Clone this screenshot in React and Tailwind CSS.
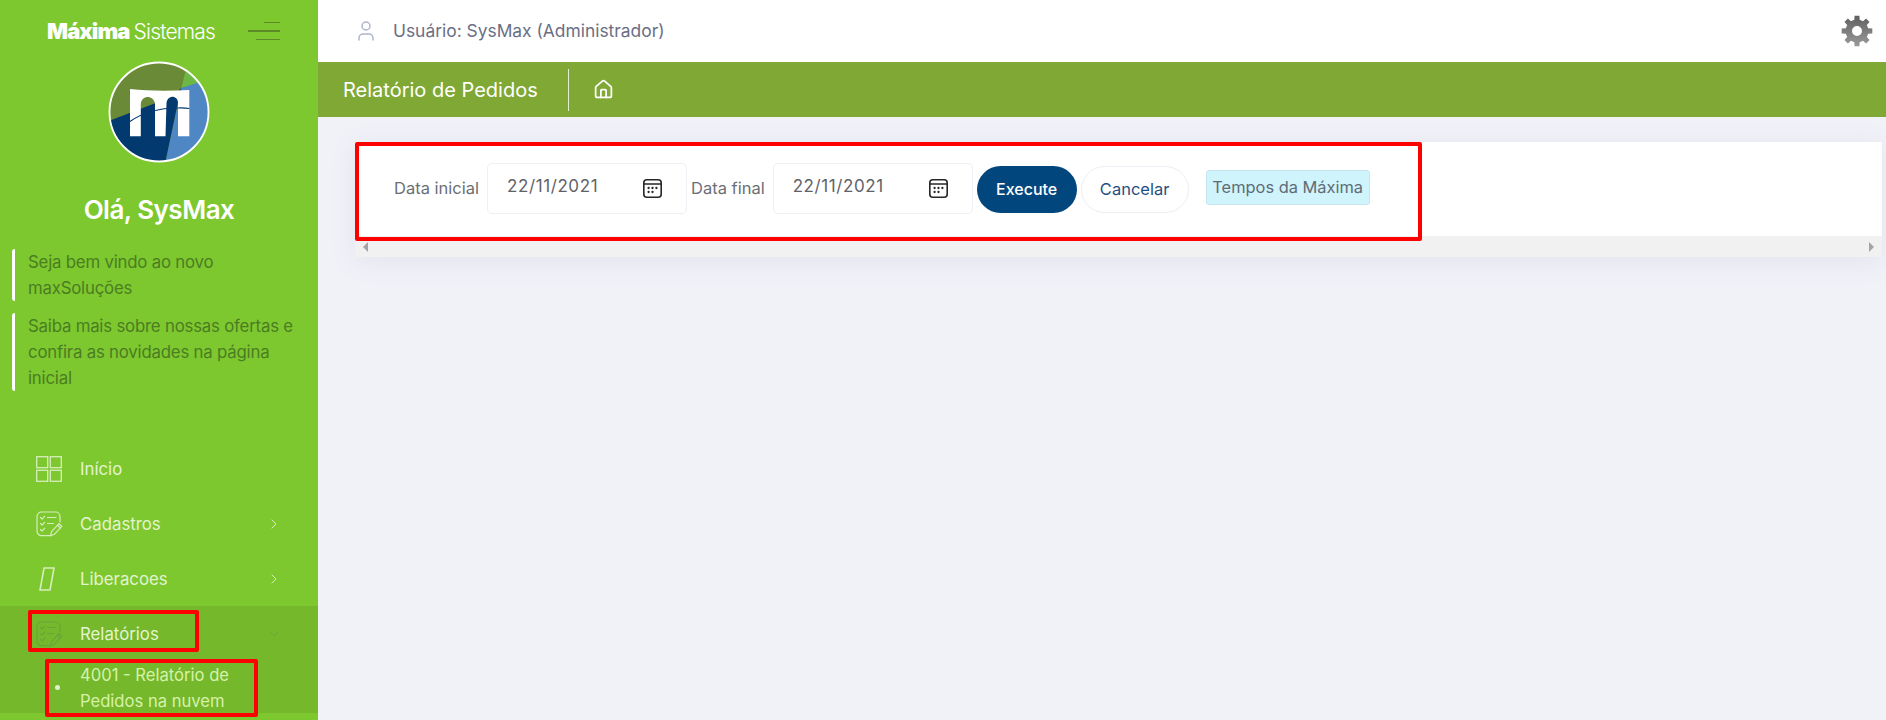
import React from "react";
import { ChevronRight, ChevronDown, User, House } from "lucide-react";

const gearPath = (() => {
  const cx = 16, cy = 16, n = 8, ro = 15.5, ri = 11.5;
  const pts = [];
  for (let i = 0; i < n; i++) {
    const a = (i / n) * Math.PI * 2 - Math.PI / 2;
    const step = (Math.PI * 2) / n;
    const w1 = step * 0.3, w2 = step * 0.2;
    [[-w1, ri], [-w2, ro], [w2, ro], [w1, ri]].forEach(([d, r]) => {
      pts.push([cx + r * Math.cos(a + d), cy + r * Math.sin(a + d)]);
    });
  }
  const outer = "M" + pts.map((p) => p[0].toFixed(2) + " " + p[1].toFixed(2)).join("L") + "Z";
  return outer + " M16 11a5 5 0 1 0 0 10a5 5 0 1 0 0-10Z";
})();

function Gear() {
  return (
    <svg width="32" height="32" viewBox="0 0 32 32" className="shrink-0">
      <defs>
        <linearGradient id="gearg" x1="0" y1="0" x2="0" y2="1">
          <stop offset="0" stopColor="#5f5f5f" />
          <stop offset="1" stopColor="#9a9a9a" />
        </linearGradient>
      </defs>
      <path d={gearPath} fill="url(#gearg)" fillRule="evenodd" />
    </svg>
  );
}

function Logo() {
  return (
    <svg width="102" height="102" viewBox="0 0 102 102" className="block">
      <defs>
        <clipPath id="lc">
          <circle cx="51" cy="51" r="49" />
        </clipPath>
      </defs>
      <g clipPath="url(#lc)">
        <rect width="102" height="102" fill="#6a8a38" />
        <polygon points="73.3,27 77.7,10 100,10 100,21" fill="#6db844" />
        <polygon points="73.3,27 100,18.5 104,104 56.7,104" fill="#4f87c4" />
        <polygon points="0,60.3 66,35 73,27 56.7,104 0,104" fill="#023a70" />
      </g>
      <path
        d="M22 28C40 30 60 30 81.3 29V75.3H70V42C70 34 59.5 33.5 58.5 42L57.5 75.3H47V43C46 34 33.5 33.5 32.8 43V75.3H22Z"
        fill="#ffffff"
      />
      <path d="M22 60.5C34 52 50 47 70 47C74 46.8 78 47 81.3 47.5" fill="none" stroke="#023a70" strokeWidth="1.1" />
      <circle cx="51" cy="51" r="49.5" fill="none" stroke="#ffffff" strokeWidth="1.8" />
    </svg>
  );
}

function GridIcon() {
  return (
    <svg width="26" height="26" viewBox="0 0 26 26" fill="none" stroke="#d6edbd" strokeWidth="1.3">
      <rect x="0.7" y="0.7" width="11" height="11" />
      <rect x="14.3" y="0.7" width="11" height="11" />
      <rect x="0.7" y="14.3" width="11" height="11" />
      <rect x="14.3" y="14.3" width="11" height="11" />
    </svg>
  );
}

function ChecklistIcon({ color = "#d6edbd" }) {
  return (
    <svg width="27" height="26" viewBox="0 0 27 26" fill="none" stroke={color} strokeWidth="1.2" strokeLinecap="round" strokeLinejoin="round">
      <path d="M15 24.6H5.5A4.5 4.5 0 0 1 1 20V5.5A4.5 4.5 0 0 1 5.5 1h14A4.5 4.5 0 0 1 24 5.5V11" />
      <path d="M4.5 6.5l1.6 1.6 2.6-3" />
      <path d="M4.5 12.5l1.6 1.6 2.6-3" />
      <path d="M4.5 18.5l1.6 1.6 2.6-3" />
      <path d="M11.5 6.5h8.5" />
      <path d="M11.5 12.5h6" />
      <path d="M14.5 24.7l1-4 7.5-8 2.8 2.6-7.5 8z" />
      <path d="M21.5 14.3l2.8 2.6" />
    </svg>
  );
}

function SlantIcon() {
  return (
    <svg width="16" height="24" viewBox="0 0 16 24" fill="none" stroke="#d6edbd" strokeWidth="1.6">
      <path d="M5 1h10l-4 22H1z" />
    </svg>
  );
}

function CalendarIcon() {
  return (
    <svg width="19" height="19" viewBox="0 0 19 19" fill="none" className="shrink-0">
      <rect x="0.8" y="0.8" width="17.4" height="17.4" rx="3" stroke="#262626" strokeWidth="1.6" />
      <path d="M1 5h17" stroke="#262626" strokeWidth="1.5" />
      {[5.6, 9.5, 13.4].map((x) => (
        <circle key={x} cx={x} cy="9" r="1.15" fill="#262626" />
      ))}
      {[5.6, 9.5].map((x) => (
        <circle key={x} cx={x} cy="13" r="1.15" fill="#262626" />
      ))}
    </svg>
  );
}

function NavItem({ icon, label, chevron = true, iconBox = "pl-[36px]" }) {
  return (
    <div className="flex h-[55px] items-center">
      <div className={"flex w-[80px] shrink-0 " + iconBox}>{icon}</div>
      <span className="flex-1 pt-[2px] text-[16.8px] text-[#e3f4d0]">{label}</span>
      {chevron && <ChevronRight size={16} className="mr-[36px] text-[#dff0cb]" strokeWidth={1.4} />}
    </div>
  );
}

function DateField() {
  return (
    <div className="mb-[2px] flex h-[51px] w-[200px] items-center justify-between rounded-[5px] border border-[#eef0f5] bg-white pl-[19px] pr-[24px]">
      <span className="relative top-[-1px] text-[17px] tracking-[0.6px] text-[#5f6368]">22/11/2021</span>
      <CalendarIcon />
    </div>
  );
}

export default function App() {
  return (
    <div className="relative flex h-[720px] w-[1886px] overflow-hidden bg-[#f1f2f8] font-['Inter','Noto_Sans',sans-serif]">
      <aside className="flex w-[318px] shrink-0 flex-col bg-[#7ec82f]">
        <div className="flex h-[61px] shrink-0 items-center pl-[47px]">
          <span className="flex w-[201px] items-baseline leading-none text-white">
            <span className="text-[22px] font-black tracking-[-0.9px]">Máxima</span>
            <span className="ml-[4px] text-[21px] font-light tracking-[-0.8px]">Sistemas</span>
          </span>
          <div className="flex w-[32px] flex-col items-end gap-[7px]">
            <span className="h-[1px] w-[16px] bg-[#5c8a28]" />
            <span className="h-[2px] w-[32px] bg-[#5c8a28]" />
            <span className="h-[1px] w-[24px] bg-[#5c8a28]" />
          </div>
        </div>
        <div className="flex justify-center">
          <Logo />
        </div>
        <div className="mt-[30px] text-center text-[26px] font-semibold leading-[34px] tracking-[-0.5px] text-white">Olá, SysMax</div>
        <div className="mt-[22px] flex flex-col gap-[12px] pl-[12px] pr-[12px]">
          <div className="rounded-l-[3px] border-l-[3px] border-white pl-[13px] text-[16.8px] leading-[26px] tracking-[-0.2px] text-[#4a7d22]">
            Seja bem vindo ao novo
            <br />
            maxSoluções
          </div>
          <div className="rounded-l-[3px] border-l-[3px] border-white pl-[13px] text-[16.8px] leading-[26px] tracking-[-0.2px] text-[#4a7d22]">
            Saiba mais sobre nossas ofertas e confira as novidades na página inicial
          </div>
        </div>
        <nav className="mt-[50px]">
          <NavItem icon={<GridIcon />} label="Início" chevron={false} />
          <NavItem icon={<ChecklistIcon />} label="Cadastros" />
          <NavItem icon={<SlantIcon />} label="Liberacoes" iconBox="pl-[39px]" />
          <div className="bg-[#76b82c]">
            <div className="flex h-[56px] items-center">
              <div className="flex w-[80px] shrink-0 pl-[36px]">
                <ChecklistIcon color="#69a63a" />
              </div>
              <span className="flex-1 pt-[2px] text-[16.8px] text-[#e3f4d0]">Relatórios</span>
              <ChevronDown size={16} className="mr-[36px] text-[#69a63a]" strokeWidth={1.4} />
            </div>
            <div className="flex h-[51px] items-center">
              <div className="flex w-[80px] shrink-0 pl-[55px]">
                <span className="h-[5px] w-[5px] rounded-full bg-[#dff0cb]" />
              </div>
              <span className="text-[16.6px] leading-[26px] text-[#d5f2a9]">
                4001 - Relatório de
                <br />
                Pedidos na nuvem
              </span>
            </div>
          </div>
        </nav>
      </aside>

      <main className="flex min-w-0 flex-1 flex-col">
        <header className="flex h-[62px] shrink-0 items-center justify-between bg-white pl-[36px] pr-[13px]">
          <div className="flex items-center gap-[15px]">
            <User size={24} strokeWidth={1.5} className="text-[#aeb4cc]" />
            <span className="text-[17.4px] text-[#6b6f85]">Usuário: SysMax (Administrador)</span>
          </div>
          <Gear />
        </header>
        <div className="flex h-[55px] shrink-0 items-center bg-[#7fa934] pl-[25px]">
          <h1 className="w-[218px] text-[20px] font-normal text-white">Relatório de Pedidos</h1>
          <span className="ml-[7px] h-[42px] w-px bg-[#e4eed0]" />
          <House size={21} strokeWidth={2} className="ml-[24px] text-white" />
        </div>
        <div className="flex-1 pl-[37px] pr-[4px] pt-[25px]">
          <div className="bg-white shadow-[0_4px_24px_rgba(120,130,160,0.12)]">
            <div className="flex h-[94px] items-center pl-[39px]">
              <span className="mb-[1px] mr-[8px] text-[16.5px] text-[#6b6f75]">Data inicial</span>
              <DateField />
              <span className="mb-[1px] ml-[4px] mr-[8px] text-[16.5px] text-[#6b6f75]">Data final</span>
              <DateField />
              <button className="ml-[4px] h-[47px] w-[100px] rounded-full bg-[#02467e] text-[16px] font-medium text-white">Execute</button>
              <button className="ml-[4px] h-[47px] w-[108px] rounded-full border border-[#eceef4] bg-white text-[16.5px] text-[#1f4f82]">Cancelar</button>
              <span className="mb-[4px] ml-[17px] flex h-[35px] w-[164px] items-center justify-center rounded-[3px] border border-[#c4e6ee] bg-[#cff4fc] text-[16.4px] text-[#5f6b75]">
                Tempos da Máxima
              </span>
            </div>
            <div className="flex h-[21px] items-center justify-between bg-[#f1f1f1] px-[8px]">
              <span className="h-0 w-0 border-y-[5px] border-r-[5px] border-y-transparent border-r-[#a3a3a3]" />
              <span className="h-0 w-0 border-y-[5px] border-l-[5px] border-y-transparent border-l-[#a3a3a3]" />
            </div>
          </div>
        </div>
      </main>

      <div className="absolute left-[355px] top-[142px] h-[99px] w-[1067px] rounded-[2px] border-4 border-[#ff0000]" />
      <div className="absolute left-[28px] top-[610px] h-[42px] w-[171px] rounded-[2px] border-4 border-[#ff0000]" />
      <div className="absolute left-[45px] top-[659px] h-[58px] w-[213px] rounded-[2px] border-4 border-[#ff0000]" />
    </div>
  );
}
